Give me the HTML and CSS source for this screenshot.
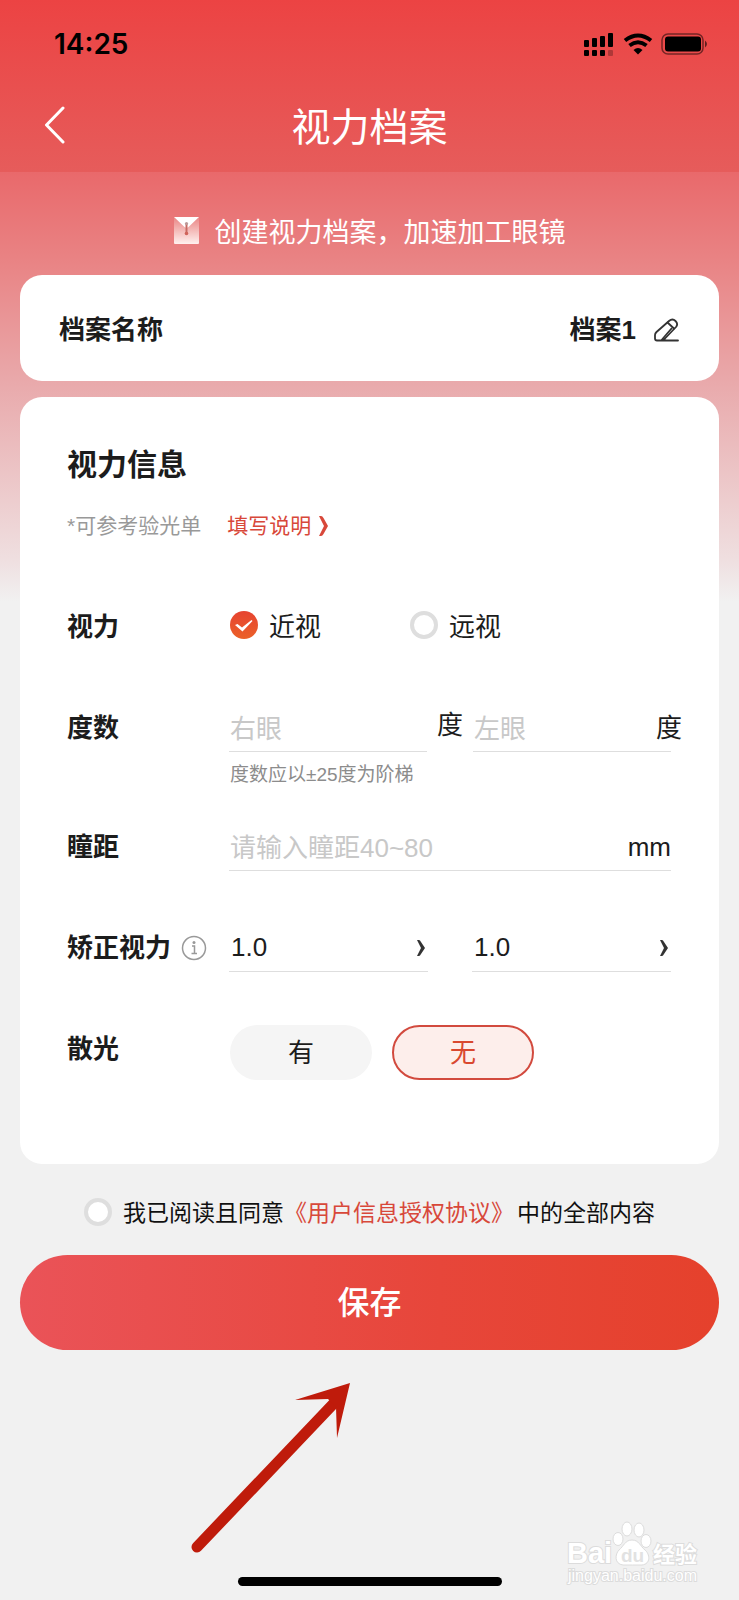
FILE: index.html
```html
<!DOCTYPE html>
<html lang="zh-CN">
<head>
<meta charset="utf-8">
<meta name="viewport" content="width=device-width, initial-scale=1">
<title>视力档案</title>
<link rel="stylesheet" href="styles.css">
</head>
<body>
<header class="header">
  <div class="status">
    <time class="clock">14:25</time>
    <svg class="status-icons" width="126" height="28" viewBox="0 0 126 28" aria-hidden="true">
      <rect x="1" y="10" width="5" height="7" rx="1"/><rect x="9" y="8" width="5" height="9" rx="1"/><rect x="17" y="6" width="5" height="11" rx="1"/><rect x="25" y="3" width="5" height="14" rx="1"/>
      <rect x="1" y="20" width="5" height="6" rx="1"/><rect x="9" y="20" width="5" height="6" rx="1"/><rect x="17" y="20" width="5" height="6" rx="1"/><rect x="25" y="20" width="5" height="6" rx="1" opacity=".25"/>
      <g fill="none" stroke="#000" stroke-width="4"><path d="M42 10.500Q55 .5 68 10.500"/><path d="M46.500 15.500Q55 9 63.500 15.500"/></g>
      <path d="M50.500 20Q55 16 59.500 20L55 24.500Z"/>
      <rect x="79" y="4" width="41" height="20" rx="6" fill="none" stroke="#000" stroke-opacity=".5" stroke-width="1.500"/>
      <rect x="82" y="6.500" width="36" height="15" rx="3"/>
      <path d="M122 10.500q4 3.500 0 7z" opacity=".6"/>
    </svg>
  </div>
  <nav class="nav">
    <button class="back" type="button" aria-label="返回"><svg width="22" height="38" viewBox="0 0 22 38"><path d="M19 2L2.500 19L19 36" fill="none" stroke="#fff" stroke-width="3" stroke-linecap="round" stroke-linejoin="round"/></svg></button>
    <h1 class="title">视力档案</h1>
  </nav>
</header>

<main class="content">
  <p class="tip">
    <svg width="25" height="27" viewBox="0 0 25 27" aria-hidden="true">
      <defs><linearGradient id="env" x2="0" y2="1"><stop offset="0" stop-color="#ea8585"/><stop offset=".4" stop-color="#f2b0ae"/><stop offset="1" stop-color="#fff1ef"/></linearGradient></defs>
      <rect width="25" height="27" rx="1" fill="url(#env)"/><path d="M0 0H25L15 9.500Q12.500 12 10 9.500Z" fill="#fff"/>
      <path d="M12.500 7V17" stroke="#c66a62" stroke-width="2"/><circle cx="12.500" cy="6.500" r="1.600" fill="#b99"/><circle cx="12.500" cy="16.500" r="1.800" fill="#d0635a"/>
    </svg>
    <span>创建视力档案，加速加工眼镜</span>
  </p>

  <form class="form">
    <section class="card name-card">
      <span class="label">档案名称</span>
      <span class="name-value"><b class="label">档案1</b>
        <button class="edit" type="button" aria-label="修改名称"><svg width="25" height="24" viewBox="0 0 25 24"><g fill="none" stroke="#333" stroke-width="1.800" stroke-linejoin="round" stroke-linecap="round"><path d="M7 22.500H3Q1 22.500 1 20.500V17Q1 15.500 2.500 14L15 3Q18.500 0 21.500 3Q24.500 6 22 9L11 20.500Q9 22.500 7 22.500H24"/><path d="M13.500 4.500L20 10.500"/><path d="M8 21.500L17.500 10.500"/></g></svg></button>
      </span>
    </section>

    <section class="card info-card">
      <h2 class="section-title">视力信息</h2>
      <p class="note"><span>*可参考验光单</span><a class="guide" href="#">填写说明<svg width="9" height="22" viewBox="0 0 9 22" aria-hidden="true"><path d="M0 1H2Q3.500 1 4.500 3L9 11L4.500 19Q3.500 21 2 21H0L5 11Z" fill="currentColor"/></svg></a></p>

      <div class="row">
        <span class="label" id="sight">视力</span>
        <div class="radios" role="radiogroup" aria-labelledby="sight">
          <label class="option"><span class="mark"><input class="radio" type="radio" name="sight" checked><svg class="tick" width="28" height="28" viewBox="0 0 28 28" aria-hidden="true"><path d="M5 14L7.500 13L12 16.500L21.500 9L22.500 10L12.500 20.500Z" fill="#fff"/></svg></span>近视</label>
          <label class="option"><span class="mark"><input class="radio" type="radio" name="sight"></span>远视</label>
        </div>
      </div>

      <div class="row">
        <span class="label">度数</span>
        <div class="pair">
          <div class="field"><input class="input" type="text" placeholder="右眼" aria-label="右眼度数"></div>
          <span class="unit unit-mid">度</span>
          <div class="field"><input class="input" type="text" placeholder="左眼" aria-label="左眼度数"><span class="unit unit-end">度</span></div>
        </div>
        <p class="hint">度数应以±25度为阶梯</p>
      </div>

      <div class="row row-near">
        <label class="label" for="pd">瞳距</label>
        <div class="field"><input class="input" id="pd" type="text" placeholder="请输入瞳距40~80"><span class="unit">mm</span></div>
      </div>

      <div class="row">
        <span class="label label-icon">矫正视力
          <svg width="26" height="26" viewBox="0 0 26 26" aria-hidden="true"><g fill="none" stroke="#999" stroke-width="1.500"><circle cx="13" cy="13" r="11.500"/><path d="M11 11H13.500V18.500M10.500 18.500H16"/></g><circle cx="13" cy="7.500" r="1.500" fill="#999"/></svg>
        </span>
        <div class="pair pair-select">
          <div class="field"><select class="input" aria-label="右眼矫正视力"><option>1.0</option></select><svg class="arrow" width="8" height="16" viewBox="0 0 8 16" aria-hidden="true"><path d="M0 0H2Q3 0 4 2L8 8L4 14Q3 16 2 16H0L4 8Z" fill="#333"/></svg></div>
          <div class="field"><select class="input" aria-label="左眼矫正视力"><option>1.0</option></select><svg class="arrow" width="8" height="16" viewBox="0 0 8 16" aria-hidden="true"><path d="M0 0H2Q3 0 4 2L8 8L4 14Q3 16 2 16H0L4 8Z" fill="#333"/></svg></div>
        </div>
      </div>

      <div class="row">
        <span class="label">散光</span>
        <div class="chips">
          <button class="chip" type="button">有</button>
          <button class="chip chip-on" type="button">无</button>
        </div>
      </div>
    </section>

    <div class="agree">
      <input class="radio" type="checkbox" id="agree">
      <span><label for="agree">我已阅读且同意</label><a class="terms" href="#">《用户信息授权协议》</a><label class="agree-end" for="agree">中的全部内容</label></span>
    </div>
    <button class="save" type="submit">保存</button>
  </form>
  <div class="home-bar"></div>
</main>

<svg class="pointer" width="162" height="174" viewBox="0 0 162 174" aria-hidden="true"><path d="M9 165L149 18" stroke="#bf1b0b" stroke-width="11" stroke-linecap="round"/><path d="M162 1L107 18L140 17L148 25L149 56Z" fill="#bf1b0b"/></svg>

<svg class="watermark" width="140" height="68" viewBox="0 0 140 68" role="img" aria-label="Baidu经验">
  <g fill="#fff" stroke="#dcdcdc" stroke-width="1">
    <ellipse cx="57" cy="19" rx="5" ry="6.500"/><ellipse cx="66" cy="9" rx="5" ry="7"/><ellipse cx="78" cy="10" rx="5" ry="7"/><ellipse cx="85" cy="21" rx="5" ry="6.500"/>
    <path d="M71 20C64 20 63 26 58 30C54 34 53 44 62 45C68 45 75 45 81 45C90 44 89 34 84 30C79 26 78 20 71 20Z"/>
    <g paint-order="stroke" stroke-width="2">
      <text class="wm-latin" x="6" y="43" font-size="29">Bai</text>
      <text class="wm-latin wm-du" x="60" y="42" font-size="19">du</text>
      <text class="wm-cjk" x="92" y="42" font-size="22">经验</text>
      <text class="wm-url" x="7" y="61" font-size="16">jingyan.baidu.com</text>
    </g>
  </g>
</svg>
</body>
</html>
```
FILE: styles.css
```css
* { box-sizing: border-box; }

body {
  position: relative;
  display: flex;
  flex-direction: column;
  min-height: 100vh;
  margin: 0;
  background: #f1f1f1;
  color: #1c1c1c;
  font-family: "Liberation Sans", "Noto Sans CJK SC", sans-serif;
  font-size: 26px;
}

h1, h2, p { margin: 0; font-weight: 400; }
button, input, select { font: inherit; color: inherit; }
button { padding: 0; border: 0; background: none; cursor: pointer; }
a { color: #d8483a; text-decoration: none; }
svg { display: block; flex: none; }

.header {
  height: 172px;
  background: linear-gradient(#ec4343, #e65c5b);
}

.status {
  display: flex;
  align-items: center;
  justify-content: space-between;
  height: 88px;
  padding: 0 30px 0 54px;
}

.clock {
  color: #000;
  font-family: Inter, sans-serif;
  font-size: 28px;
  font-weight: 600;
}

.nav {
  display: grid;
  grid-template-columns: 60px 1fr 60px;
  align-items: center;
  height: 74px;
  padding: 0 20px;
  color: #fff;
}

.back { justify-self: center; margin-left: 10px; }
.title { padding-top: 6px; text-align: center; font-size: 39px; line-height: 56px; }

.content {
  display: flex;
  flex: 1;
  flex-direction: column;
  padding: 0 20px 14px;
  background: linear-gradient(#e9696b 0, #e98384 88px, #e9aaac 213px, #efdfe0 388px, #f1f1f1 430px);
}

.tip {
  display: flex;
  align-items: center;
  justify-content: center;
  gap: 16px;
  height: 103px;
  padding-top: 14px;
  color: #fff;
  font-size: 27px;
}

.form { display: flex; flex-direction: column; }
.card { border-radius: 22px; background: #fff; }

.name-card {
  display: flex;
  align-items: center;
  justify-content: space-between;
  height: 106px;
  margin-bottom: 16px;
  padding: 4px 40px 0 39px;
}

.label { font-weight: 600; line-height: 48px; }
.name-value { display: flex; align-items: center; gap: 18px; }

.info-card { padding: 48px 48px 84px 47px; }
.section-title { font-size: 30px; font-weight: 600; line-height: 40px; }

.note {
  display: flex;
  gap: 26px;
  margin-top: 26px;
  color: #999;
  font-size: 21px;
  line-height: 30px;
}

.guide { display: flex; align-items: center; gap: 8px; }

.row {
  display: grid;
  grid-template-columns: 162px 1fr;
  margin-top: 53px;
}

.note + .row { margin-top: 62px; }
.row-near { margin-top: 37px; }

.label-icon { display: flex; align-items: center; gap: 10px; }

.radios { display: grid; grid-template-columns: 180px 1fr; padding-left: 1px; }
.option { display: flex; align-items: center; gap: 11px; line-height: 48px; }
.mark { display: grid; margin-bottom: 4px; }
.mark > * { grid-area: 1 / 1; }
.tick { pointer-events: none; z-index: 1; }

.radio {
  width: 28px;
  height: 28px;
  margin: 0;
  appearance: none;
  border: 4px solid #dedede;
  border-radius: 50%;
  background: #fff;
}

.radio:checked { border: 0; background: linear-gradient(#e64330, #eb6129); }

.pair { display: grid; grid-template-columns: 1fr 46px 1fr; }
.pair-select { grid-template-columns: 1fr 1fr; column-gap: 44px; }

.field {
  display: flex;
  align-items: center;
  height: 48px;
  min-width: 0;
  border-bottom: 1px solid #dedede;
}

.input {
  flex: 1;
  min-width: 0;
  height: 47px;
  padding: 4px 1px 0;
  appearance: none;
  border: 0;
  outline: 0;
  background: none;
}

select.input { padding: 0 2px 2px; }

.input::placeholder { color: #c8c8c8; opacity: 1; }
.arrow { margin-right: 3px; }

.unit { line-height: 42px; }
.unit-mid { text-align: center; }
.unit-end { margin-right: -11px; }

.hint {
  grid-column: 2;
  margin-top: 12px;
  padding-left: 1px;
  color: #8c8c8c;
  font-size: 19px;
  line-height: 22px;
}

.chips { display: flex; gap: 20px; padding-left: 1px; }

.chip {
  width: 142px;
  height: 55px;
  padding-bottom: 4px;
  border-radius: 28px;
  background: #f5f5f5;
}

.chip-on { border: 2px solid #d24a3e; background: #fdeeeb; color: #d9482f; }

.agree {
  display: flex;
  align-items: center;
  justify-content: center;
  gap: 11px;
  height: 91px;
  padding-top: 5px;
  color: #111;
  font-size: 23px;
}

.agree span { padding-bottom: 3px; }
.agree-end { margin-left: 3px; }

.save {
  height: 95px;
  padding-bottom: 6px;
  border-radius: 48px;
  background: linear-gradient(90deg, #ea5358, #e7463a 60%, #e5412c);
  color: #fff;
  font-size: 32px;
  font-weight: 500;
}

.home-bar {
  width: 36%;
  min-width: 264px;
  height: 9px;
  margin: auto auto 0;
  border-radius: 5px;
  background: #000;
}

.pointer { position: absolute; top: 1382px; left: 188px; }
.watermark { position: absolute; right: 38px; bottom: 12px; }
.wm-latin { font-family: "Liberation Sans", sans-serif; font-weight: 700; }
.wm-du { fill: #e2e2e2; stroke: none; }
.wm-cjk { font-family: "Noto Sans CJK SC", sans-serif; font-weight: 700; }
.wm-url { font-family: "Liberation Sans", sans-serif; }
```
